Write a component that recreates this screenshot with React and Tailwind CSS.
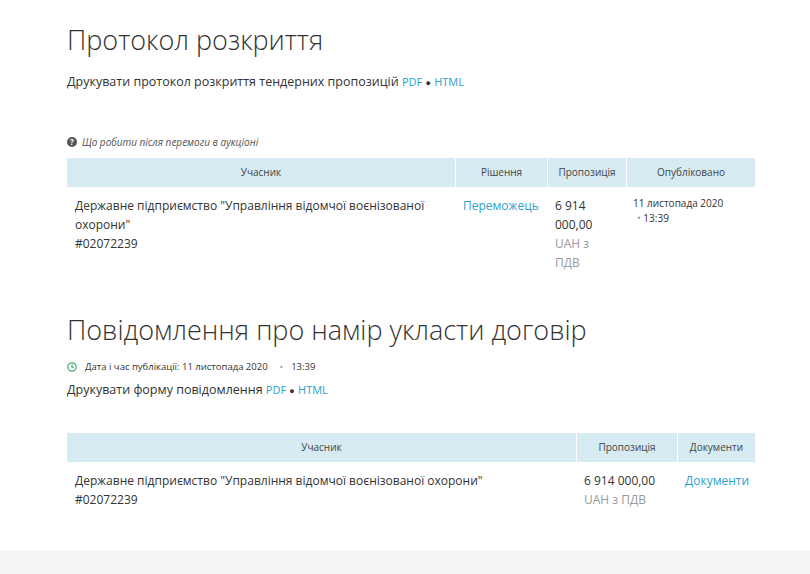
export default function App() {
  const f = { fontFamily: '"Open Sans", sans-serif' };
  return (
    <div style={f} className="w-[810px] h-[574px] bg-white text-[#333] flex flex-col overflow-hidden">
      <div className="flex-1 px-[67px] pt-[20px] w-[822px]">
        <h1 className="text-[27px] font-light leading-[40px] text-[#333]">Протокол розкриття</h1>
        <p className="mt-[13px] text-[12.5px] leading-[18px]">Друкувати протокол розкриття тендерних пропозицій <span className="text-[#2d9fd0] text-[11px]">PDF</span> <span className="text-[9px]">●</span> <span className="text-[#2d9fd0] text-[11px]">HTML</span></p>
        <p className="mt-[43px] text-[10px] italic text-[#555] flex items-center gap-[5px] leading-[14px]">
          <span className="inline-flex w-[10px] h-[10px] rounded-full bg-[#555] text-white text-[8px] not-italic font-bold items-center justify-center">?</span>
          Що робити після перемоги в аукціоні
        </p>
        <div className="mt-[9px] w-[688px] text-[10px]">
          <div className="grid grid-cols-[388px_91px_78px_128px] gap-x-[1px] h-[29px] text-[#444]">
            <div className="bg-[#d7ebf3] flex items-center justify-center">Учасник</div>
            <div className="bg-[#d7ebf3] flex items-center justify-center">Рішення</div>
            <div className="bg-[#d7ebf3] flex items-center justify-center">Пропозиція</div>
            <div className="bg-[#d7ebf3] flex items-center justify-center">Опубліковано</div>
          </div>
          <div className="grid grid-cols-[388px_91px_78px_128px] gap-x-[1px] pt-[9px] text-[12px] leading-[19px]">
            <div className="px-[8px]">Державне підприємство "Управління відомчої воєнізованої охорони"<br />#02072239</div>
            <div className="px-[7px] text-[#2d9fd0]">Переможець</div>
            <div className="px-[7px]">6 914<br />000,00<br /><span className="text-[#999]">UAH з<br />ПДВ</span></div>
            <div className="px-[6px] text-[10px] leading-[15px]">11 листопада 2020<br /><span className="pl-[4px] text-[#999]">• </span>13:39</div>
          </div>
        </div>
        <h1 className="mt-[38px] text-[27px] font-light leading-[40px]">Повідомлення про намір укласти договір</h1>
        <p className="mt-[10px] text-[9.5px] flex items-center gap-[8px] leading-[14px]">
          <svg width="10" height="10" viewBox="0 0 24 24" fill="none" stroke="#3cb371" strokeWidth="3"><circle cx="12" cy="12" r="10"/><path d="M12 6v6l4 2"/></svg>
          Дата і час публікації: 11 листопада 2020 <span className="text-[#999] pl-[4px]">•</span> 13:39
        </p>
        <p className="mt-[7px] text-[12.5px] leading-[18px]">Друкувати форму повідомлення <span className="text-[#2d9fd0] text-[11px]">PDF</span> <span className="text-[9px]">●</span> <span className="text-[#2d9fd0] text-[11px]">HTML</span></p>
        <div className="mt-[33px] w-[688px] text-[10px]">
          <div className="grid grid-cols-[509px_100px_77px] gap-x-[1px] h-[29px] text-[#444]">
            <div className="bg-[#d7ebf3] flex items-center justify-center">Учасник</div>
            <div className="bg-[#d7ebf3] flex items-center justify-center">Пропозиція</div>
            <div className="bg-[#d7ebf3] flex items-center justify-center">Документи</div>
          </div>
          <div className="grid grid-cols-[509px_100px_77px] gap-x-[1px] pt-[9px] text-[12px] leading-[19px]">
            <div className="px-[8px]">Державне підприємство "Управління відомчої воєнізованої охорони"<br />#02072239</div>
            <div className="px-[7px]">6 914 000,00<br /><span className="text-[#999]">UAH з ПДВ</span></div>
            <div className="px-[7px] text-[#2d9fd0]">Документи</div>
          </div>
        </div>
      </div>
      <div className="h-[24px] bg-[#f5f5f5] shrink-0"></div>
    </div>
  );
}
